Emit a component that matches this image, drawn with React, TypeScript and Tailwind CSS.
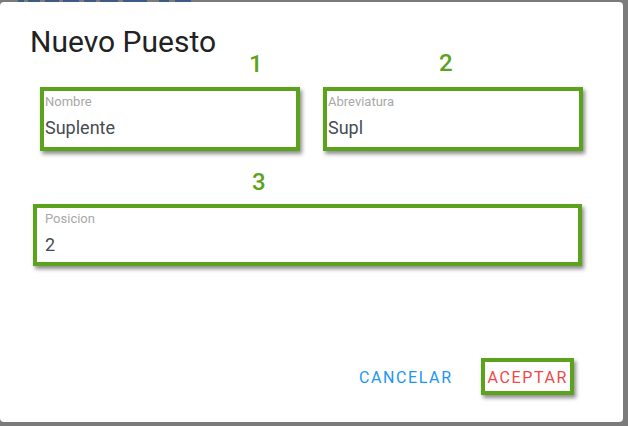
import React from 'react';

const font = { fontFamily: 'Roboto, "Liberation Sans", sans-serif' };

const strip = [
  [18, 6], [4, 12], [5, 14], [4, 16], [5, 12], [4, 18], [5, 24], [12, 10], [6, 16],
];

interface FieldProps {
  label: string;
  value: string;
  className?: string;
  tight?: boolean;
}

const Field: React.FC<FieldProps> = ({ label, value, className = '', tight }) => (
  <div
    className={`border-4 border-[#5ba31d] bg-white shadow-[2px_3px_4px_rgba(0,0,0,0.45)] ${tight ? 'pb-[6px] pl-[8px]' : 'pb-[8px] pl-px'} pt-[3px] ${className}`}
  >
    <div className="text-[13px] leading-[16px] text-[#a8a8a8]">{label}</div>
    <div className="mt-[7px] text-[18px] leading-[22px] text-[#464b52]">{value}</div>
  </div>
);

const App: React.FC = () => {
  return (
    <div className="w-[628px] h-[426px] bg-[#7b7b7b] overflow-hidden" style={font}>
      <div className="flex h-[2px]">
        {strip.map(([gap, w], i) => (
          <span key={i} className="flex">
            <span style={{ width: gap }} />
            <span style={{ width: w }} className="h-[2px] bg-[#3b5b86]" />
          </span>
        ))}
      </div>
      <div className="relative w-[623px] h-[420px] bg-white rounded-[4px] pt-[22px]">
        <h1 className="pl-[30px] text-[30px] leading-[36px] text-[#222222] font-normal">Nuevo Puesto</h1>

        <span className="absolute left-[249px] top-[50px] text-[24px] leading-[24px] font-medium text-[#5ba31d]">1</span>
        <span className="absolute left-[439px] top-[49px] text-[24px] leading-[24px] font-medium text-[#5ba31d]">2</span>
        <span className="absolute left-[252px] top-[168px] text-[24px] leading-[24px] font-medium text-[#5ba31d]">3</span>

        <div className="flex mt-[27px] pl-[40px] gap-[23px]">
          <Field label="Nombre" value="Suplente" className="w-[260px] h-[64px]" />
          <Field label="Abreviatura" value="Supl" className="w-[260px] h-[64px]" />
        </div>

        <div className="mt-[53px] pl-[33px]">
          <Field label="Posicion" value="2" tight className="w-[549px] h-[62px]" />
        </div>

        <div className="flex justify-end items-start mt-[92px] pr-[49px]">
          <button className="mr-[22px] border-4 border-transparent pt-[6px] pb-[3px] px-[2px] text-[16px] leading-[20px] tracking-[1.6px] text-[#2196f3]">
            CANCELAR
          </button>
          <button className="border-4 border-[#5ba31d] shadow-[2px_3px_4px_rgba(0,0,0,0.45)] pt-[6px] pb-[3px] pl-[3px] pr-[2px] text-[16px] leading-[20px] tracking-[1.6px] text-[#f04848]">
            ACEPTAR
          </button>
        </div>
      </div>
    </div>
  );
};

export default App;
